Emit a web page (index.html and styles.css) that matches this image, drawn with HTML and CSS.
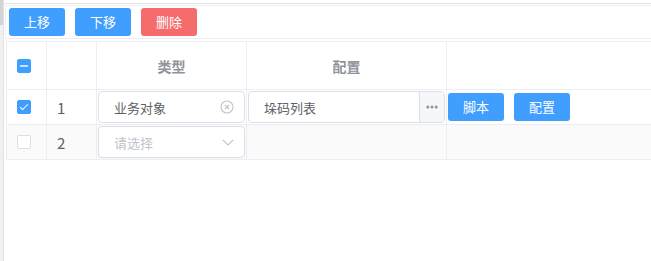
FILE: index.html
```html
<!DOCTYPE html>
<html lang="zh-CN">
<head>
    <meta charset="UTF-8">
    <meta name="viewport" content="width=device-width, initial-scale=1.0">
    <title>配置列表</title>
    <link rel="stylesheet" href="styles.css">
</head>
<body>
    <div class="page">
        <div class="rail"><div class="rail-thumb"></div></div>
        <div class="main">
            <div class="toolbar">
                <button class="btn btn-primary">上移</button>
                <button class="btn btn-primary">下移</button>
                <button class="btn btn-danger">删除</button>
            </div>
            <div class="grid">
                <!-- 表头 -->
                <div class="cell head check-cell"><span class="checkbox is-indeterminate"></span></div>
                <div class="cell head"></div>
                <div class="cell head center">类型</div>
                <div class="cell head center">配置</div>
                <div class="cell head"></div>

                <!-- 第一行 -->
                <div class="cell check-cell"><span class="checkbox is-checked"></span></div>
                <div class="cell index">1</div>
                <div class="cell field-cell">
                    <div class="select">
                        <span>业务对象</span>
                        <svg class="select-icon" width="14" height="14" viewBox="0 0 14 14">
                            <circle cx="7" cy="7" r="6" fill="none" stroke="#c0c4cc" stroke-width="1.1"/>
                            <path d="M5 5 L9 9 M9 5 L5 9" stroke="#c0c4cc" stroke-width="1.1" fill="none"/>
                        </svg>
                    </div>
                </div>
                <div class="cell field-cell">
                    <div class="input-group">
                        <div class="input-text">垛码列表</div>
                        <div class="input-append">
                            <svg width="12" height="4" viewBox="0 0 12 4">
                                <circle cx="1.8" cy="2" r="1.5" fill="#909399"/>
                                <circle cx="6" cy="2" r="1.5" fill="#909399"/>
                                <circle cx="10.2" cy="2" r="1.5" fill="#909399"/>
                            </svg>
                        </div>
                    </div>
                </div>
                <div class="cell action-cell">
                    <button class="btn btn-primary">脚本</button>
                    <button class="btn btn-primary">配置</button>
                </div>

                <!-- 第二行 -->
                <div class="cell check-cell striped"><span class="checkbox"></span></div>
                <div class="cell index striped">2</div>
                <div class="cell field-cell striped">
                    <div class="select is-empty">
                        <span>请选择</span>
                        <svg class="select-icon" width="12" height="7" viewBox="0 0 12 7">
                            <path d="M0.8 0.8 L6 6 L11.2 0.8" stroke="#c0c4cc" stroke-width="1.2" fill="none"/>
                        </svg>
                    </div>
                </div>
                <div class="cell striped"></div>
                <div class="cell striped"></div>
            </div>
        </div>
    </div>
</body>
</html>
```

FILE: styles.css
```css
/* Estrutura geral */
* {
    box-sizing: border-box;
}
body {
    margin: 0;
    overflow: hidden;
    font-family: "Noto Sans CJK SC", "Noto Sans", sans-serif;
    color: #606266;
    background: #fff;
}
.page {
    display: flex;
    height: 261px;
}
.rail {
    width: 3px;
    background: #f0f0f0;
    border-right: 1px solid #e2e2e2;
    flex: 0 0 4px;
}
.rail-thumb {
    height: 25px;
    background: #d4d4d4;
}
.main {
    flex: 1;
    min-width: 0;
    margin-top: 3px;
    border-top: 1px solid #e6e6e6;
    overflow: hidden;
}

/* Barra de botões */
.toolbar {
    display: flex;
    gap: 10px;
    margin: 1px 0 0 1px;
    padding: 2px 0 2px 3px;
    border: 1px solid #ebeef5;
    border-right: none;
}
.btn {
    width: 56px;
    height: 28px;
    padding: 0;
    border: none;
    border-radius: 3px;
    font-family: inherit;
    font-size: 13px;
    line-height: 28px;
    color: #fff;
    cursor: pointer;
}
.btn-primary {
    background: #409eff;
}
.btn-danger {
    background: #f56c6c;
}

/* Tabela */
.grid {
    display: grid;
    grid-template-columns: 40px 50px 150px 200px 300px;
    grid-auto-rows: 35px;
    grid-template-rows: 48px;
    margin: 2px 0 0 2px;
    border-top: 1px solid #ebeef5;
    border-left: 1px solid #ebeef5;
    width: max-content;
}
.cell {
    display: flex;
    align-items: center;
    border-right: 1px solid #ebeef5;
    border-bottom: 1px solid #ebeef5;
    font-size: 14px;
}
.cell.head {
    font-weight: bold;
    color: #909399;
}
.cell.center {
    justify-content: center;
}
.cell.striped {
    background: #fafafa;
}
.check-cell {
    padding-left: 10px;
}
.index {
    padding-left: 10px;
    font-size: 15px;
}
.field-cell {
    padding: 0 1px;
}
.action-cell {
    padding-left: 1px;
    gap: 10px;
}

/* Checkbox */
.checkbox {
    position: relative;
    width: 14px;
    height: 14px;
    border: 1px solid #dcdfe6;
    border-radius: 2px;
    background: #fff;
}
.checkbox.is-checked,
.checkbox.is-indeterminate {
    background: #409eff;
    border-color: #409eff;
}
.checkbox.is-indeterminate::after {
    content: "";
    position: absolute;
    left: 2px;
    right: 2px;
    top: 5px;
    height: 2px;
    background: #fff;
    opacity: 0.7;
}
.checkbox.is-checked::after {
    content: "";
    position: absolute;
    left: 4px;
    top: 1px;
    width: 3px;
    height: 7px;
    border: 1px solid #fff;
    border-left: none;
    border-top: none;
    transform: rotate(45deg);
}

/* Campos */
.select {
    display: flex;
    align-items: center;
    justify-content: space-between;
    width: 100%;
    height: 32px;
    padding: 0 10px 0 15px;
    border: 1px solid #dcdfe6;
    border-radius: 4px;
    background: #fff;
    font-size: 13px;
    color: #606266;
}
.select.is-empty {
    color: #c0c4cc;
}
.input-group {
    display: flex;
    width: 100%;
    height: 32px;
    border: 1px solid #dcdfe6;
    border-radius: 4px;
    background: #fff;
    overflow: hidden;
}
.input-text {
    flex: 1;
    display: flex;
    align-items: center;
    padding-left: 15px;
    border-right: 1px solid #dcdfe6;
    font-size: 13px;
    color: #606266;
}
.input-append {
    flex: 0 0 24px;
    display: flex;
    align-items: center;
    justify-content: center;
    background: #f5f7fa;
}
```
